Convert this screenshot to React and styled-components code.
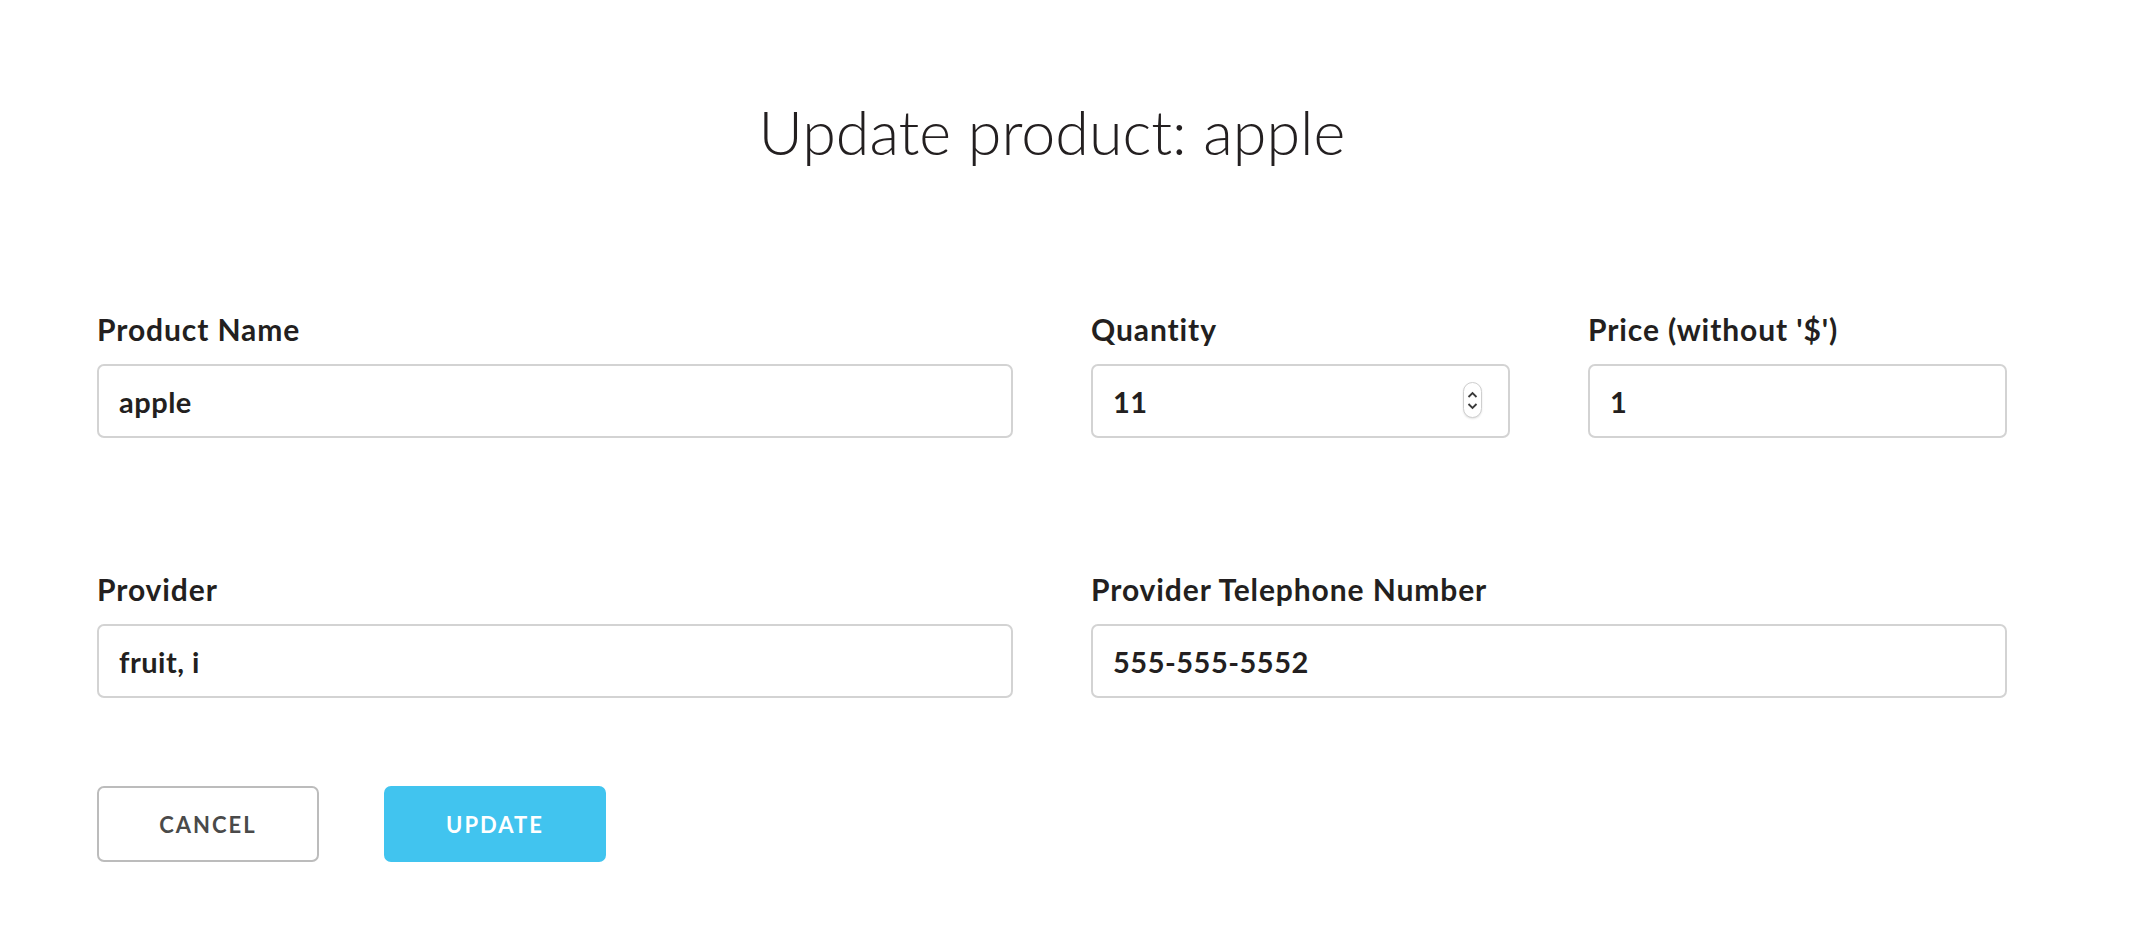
import React from 'react';
import styled, { createGlobalStyle } from 'styled-components';

// 페이지 기본 스타일
const GlobalStyle = createGlobalStyle`
  html, body {
    margin: 0;
    padding: 0;
    background: #fff;
  }

  body {
    font-family: Lato, "Open Sans", "Liberation Sans", sans-serif;
    color: #231f20;
  }
`;

const fields = {
  name: 'apple',
  quantity: '11',
  price: '1',
  provider: 'fruit, i',
  phone: '555-555-5552',
};

// 수량 입력칸의 위/아래 화살표
const Spinner = () => (
  <SpinBox>
    <svg width="11" height="8" viewBox="0 0 11 8">
      <path d="M1.5 6 L5.5 2 L9.5 6" fill="none" stroke="#3a3a3a" strokeWidth="1.8" />
    </svg>
    <svg width="11" height="8" viewBox="0 0 11 8">
      <path d="M1.5 2 L5.5 6 L9.5 2" fill="none" stroke="#3a3a3a" strokeWidth="1.8" />
    </svg>
  </SpinBox>
);

const App = () => {
  return (
    <Page>
      <GlobalStyle />
      <Title>Update product: {fields.name}</Title>

      <FormGrid>
        <Field>
          <Label>Product Name</Label>
          <Input defaultValue={fields.name} />
        </Field>

        <Field>
          <Label>Quantity</Label>
          <InputWrap>
            <Input defaultValue={fields.quantity} />
            <Spinner />
          </InputWrap>
        </Field>

        <Field>
          <Label>Price (without '$')</Label>
          <Input defaultValue={fields.price} />
        </Field>

        <Field $row2>
          <Label>Provider</Label>
          <Input defaultValue={fields.provider} />
        </Field>

        <Field $row2 $span={2}>
          <Label>Provider Telephone Number</Label>
          <Input defaultValue={fields.phone} />
        </Field>
      </FormGrid>

      <Buttons>
        <Button type="button">Cancel</Button>
        <Button type="button" $primary>Update</Button>
      </Buttons>
    </Page>
  );
};

export default App;

// 전체 페이지
const Page = styled.div`
  width: 1910px;
  padding: 92px 125px 60px 97px;
`;

// 제목
const Title = styled.h1`
  margin: 0;
  font-size: 61px;
  line-height: 80px;
  font-weight: 300;
  text-align: center;
  color: #231f20;
`;

// 입력칸 그리드
const FormGrid = styled.div`
  display: grid;
  grid-template-columns: 916px 419px 419px;
  column-gap: 78px;
  margin-top: 140px;
`;

const Field = styled.div`
  display: flex;
  flex-direction: column;
  grid-column: ${(p) => (p.$span ? `span ${p.$span}` : 'auto')};
  margin-top: ${(p) => (p.$row2 ? '134px' : '0')};
`;

const Label = styled.label`
  font-size: 30px;
  line-height: 34px;
  font-weight: 700;
  letter-spacing: 0.9px;
  color: #231f20;
  margin-bottom: 18px;
`;

const InputWrap = styled.div`
  position: relative;
`;

const Input = styled.input`
  box-sizing: border-box;
  width: 100%;
  height: 74px;
  padding: 0 20px;
  border: 2px solid #d3d3d3;
  border-radius: 7px;
  font-family: Lato, "Liberation Sans", sans-serif;
  font-size: 29px;
  font-weight: 700;
  letter-spacing: 0.5px;
  color: #231f20;
  background: #fff;
  outline: none;
`;

const SpinBox = styled.span`
  position: absolute;
  right: 28px;
  top: 18px;
  box-sizing: border-box;
  width: 19px;
  height: 36px;
  display: flex;
  flex-direction: column;
  align-items: center;
  justify-content: center;
  gap: 3px;
  border: 1px solid #cfcfcf;
  border-radius: 10px;
  background: #fff;
  box-shadow: 0 1px 2px rgba(0, 0, 0, 0.12);
`;

// 하단 버튼
const Buttons = styled.div`
  display: flex;
  gap: 65px;
  margin-top: 88px;
`;

const Button = styled.button`
  box-sizing: border-box;
  width: 222px;
  height: 76px;
  border-radius: 7px;
  border: 2px solid ${(p) => (p.$primary ? '#41c4ef' : '#bcbcbc')};
  background: ${(p) => (p.$primary ? '#41c4ef' : '#fff')};
  color: ${(p) => (p.$primary ? '#fff' : '#4a4a4a')};
  font-family: Lato, "Liberation Sans", sans-serif;
  font-size: 22px;
  font-weight: 700;
  letter-spacing: 2px;
  text-transform: uppercase;
  cursor: pointer;
`;
